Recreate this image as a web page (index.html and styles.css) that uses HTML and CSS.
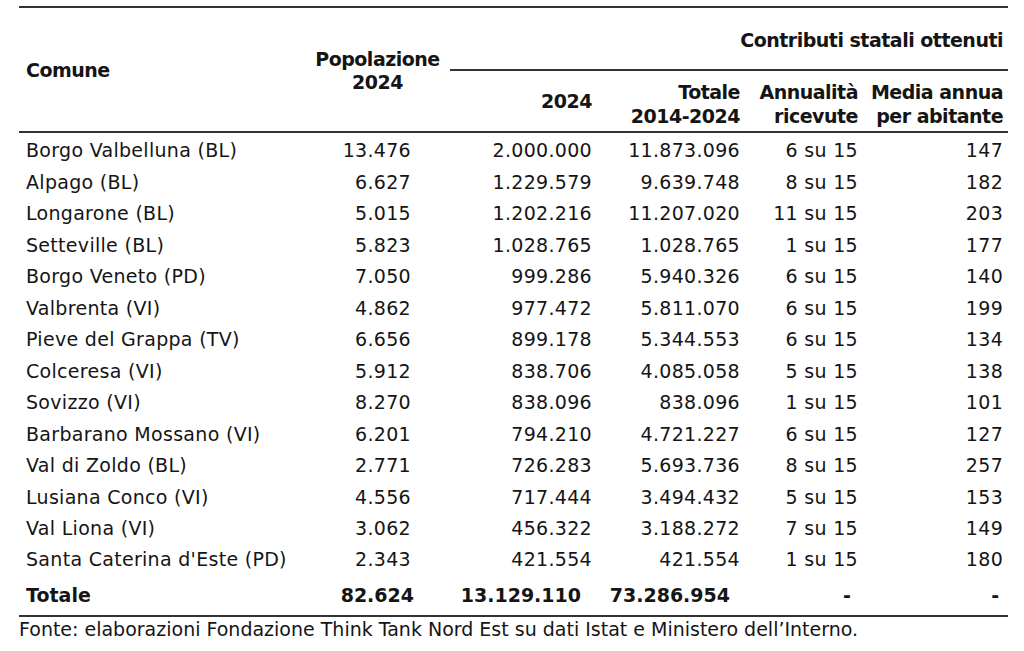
FILE: index.html
```html
<!DOCTYPE html>
<html lang="it">
<head>
<meta charset="utf-8">
<title>Contributi statali ottenuti</title>
<link rel="stylesheet" href="styles.css">
</head>
<body>
<div class="page">
  <table class="data">
    <colgroup>
      <col class="c-comune">
      <col class="c-pop">
      <col class="c-2024">
      <col class="c-tot">
      <col class="c-ann">
      <col class="c-media">
    </colgroup>
    <thead>
      <tr class="h1">
        <th rowspan="2" class="th-comune">Comune</th>
        <th rowspan="2" class="th-pop">Popolazione<br>2024</th>
        <th colspan="4" class="th-group">Contributi statali ottenuti</th>
      </tr>
      <tr class="h2">
        <th class="num th-single">2024</th>
        <th class="num">Totale<br>2014-2024</th>
        <th class="num">Annualità<br>ricevute</th>
        <th class="num">Media annua<br>per abitante</th>
      </tr>
    </thead>
    <tbody>
      <tr><td class="name">Borgo Valbelluna (BL)</td><td class="pop">13.476</td><td class="num">2.000.000</td><td class="num">11.873.096</td><td class="num">6 su 15</td><td class="num">147</td></tr>
      <tr><td class="name">Alpago (BL)</td><td class="pop">6.627</td><td class="num">1.229.579</td><td class="num">9.639.748</td><td class="num">8 su 15</td><td class="num">182</td></tr>
      <tr><td class="name">Longarone (BL)</td><td class="pop">5.015</td><td class="num">1.202.216</td><td class="num">11.207.020</td><td class="num">11 su 15</td><td class="num">203</td></tr>
      <tr><td class="name">Setteville (BL)</td><td class="pop">5.823</td><td class="num">1.028.765</td><td class="num">1.028.765</td><td class="num">1 su 15</td><td class="num">177</td></tr>
      <tr><td class="name">Borgo Veneto (PD)</td><td class="pop">7.050</td><td class="num">999.286</td><td class="num">5.940.326</td><td class="num">6 su 15</td><td class="num">140</td></tr>
      <tr><td class="name">Valbrenta (VI)</td><td class="pop">4.862</td><td class="num">977.472</td><td class="num">5.811.070</td><td class="num">6 su 15</td><td class="num">199</td></tr>
      <tr><td class="name">Pieve del Grappa (TV)</td><td class="pop">6.656</td><td class="num">899.178</td><td class="num">5.344.553</td><td class="num">6 su 15</td><td class="num">134</td></tr>
      <tr><td class="name">Colceresa (VI)</td><td class="pop">5.912</td><td class="num">838.706</td><td class="num">4.085.058</td><td class="num">5 su 15</td><td class="num">138</td></tr>
      <tr><td class="name">Sovizzo (VI)</td><td class="pop">8.270</td><td class="num">838.096</td><td class="num">838.096</td><td class="num">1 su 15</td><td class="num">101</td></tr>
      <tr><td class="name">Barbarano Mossano (VI)</td><td class="pop">6.201</td><td class="num">794.210</td><td class="num">4.721.227</td><td class="num">6 su 15</td><td class="num">127</td></tr>
      <tr><td class="name">Val di Zoldo (BL)</td><td class="pop">2.771</td><td class="num">726.283</td><td class="num">5.693.736</td><td class="num">8 su 15</td><td class="num">257</td></tr>
      <tr><td class="name">Lusiana Conco (VI)</td><td class="pop">4.556</td><td class="num">717.444</td><td class="num">3.494.432</td><td class="num">5 su 15</td><td class="num">153</td></tr>
      <tr><td class="name">Val Liona (VI)</td><td class="pop">3.062</td><td class="num">456.322</td><td class="num">3.188.272</td><td class="num">7 su 15</td><td class="num">149</td></tr>
      <tr><td class="name">Santa Caterina d'Este (PD)</td><td class="pop">2.343</td><td class="num">421.554</td><td class="num">421.554</td><td class="num">1 su 15</td><td class="num">180</td></tr>
    </tbody>
    <tfoot>
      <tr class="total">
        <td class="name">Totale</td>
        <td class="pop">82.624</td>
        <td class="num t-2024">13.129.110</td>
        <td class="num t-tot">73.286.954</td>
        <td class="num t-ann">-</td>
        <td class="num t-media">-</td>
      </tr>
    </tfoot>
  </table>
  <p class="source">Fonte: elaborazioni Fondazione Think Tank Nord Est su dati Istat e Ministero dell’Interno.</p>
</div>
</body>
</html>
```

FILE: styles.css
```css
html, body {
  margin: 0;
  padding: 0;
  background: #ffffff;
}

body {
  font-family: "DejaVu Sans", Verdana, sans-serif;
  font-size: 19px;
  color: #151515;
}

.page {
  padding: 6px 0 0 19px;
}

.data {
  width: 989px;
  table-layout: fixed;
  border-collapse: separate;
  border-spacing: 0;
}

.c-comune { width: 286px; }
.c-pop { width: 145px; }
.c-2024 { width: 147px; }
.c-tot { width: 148px; }
.c-ann { width: 118px; }
.c-media { width: 145px; }

th, td {
  padding: 0 5px;
  white-space: nowrap;
}

th {
  font-weight: bold;
  letter-spacing: -0.5px;
}

/* header row 1 */
.h1 th {
  border-top: 2px solid #333;
}

.th-comune {
  text-align: left;
  padding-left: 7px;
  vertical-align: middle;
  line-height: 23px;
  padding-top: 2px;
  border-bottom: 2px solid #333;
}

.th-pop {
  text-align: center;
  vertical-align: middle;
  line-height: 23px;
  padding-top: 3px;
  border-bottom: 2px solid #333;
}

.th-group {
  text-align: right;
  line-height: 23px;
  padding-top: 21px;
  padding-bottom: 17px;
  border-bottom: 2px solid #333;
}

/* header row 2 */
.h2 th {
  line-height: 24px;
  padding-top: 8.5px;
  padding-bottom: 3.5px;
  vertical-align: top;
  border-bottom: 2px solid #333;
}

.h2 th.th-single {
  padding-top: 17.5px;
}

.num {
  text-align: right;
}

/* body rows */
tbody td {
  line-height: 23px;
  padding-top: 6.2px;
  padding-bottom: 2.3px;
  letter-spacing: 0.3px;
}

td.name {
  text-align: left;
  padding-left: 7px;
}

td.pop {
  text-align: right;
  padding-right: 39px;
}

/* total row */
.total td {
  font-weight: bold;
  line-height: 23px;
  padding-top: 10.5px;
  padding-bottom: 7.5px;
  border-bottom: 2px solid #333;
}

.total td.pop { padding-right: 36px; }
.total td.t-2024 { padding-right: 16px; }
.total td.t-tot { padding-right: 15px; }
.total td.t-ann { padding-right: 12px; }
.total td.t-media { padding-right: 9px; }

.source {
  margin: 0;
  padding-top: 1px;
  line-height: 23px;
}
```
